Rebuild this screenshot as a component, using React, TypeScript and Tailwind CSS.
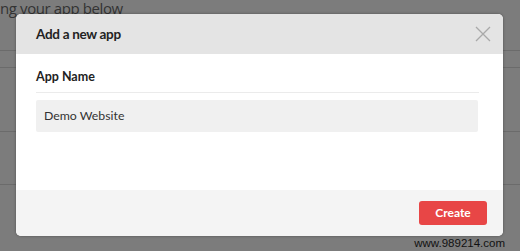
import React from 'react'

function CloseIcon() {
  return (
    <svg width="16" height="16" viewBox="0 0 16 16" fill="none" stroke="#a9a9a9" strokeWidth="1.3">
      <path d="M1 1 L15 15 M15 1 L1 15" />
    </svg>
  )
}

export default function App() {
  return (
    <div className="relative h-[251px] w-[520px] overflow-hidden bg-[#7c7c7c] font-['Lato',sans-serif]">
      {/* dimmed page behind the dialog */}
      <div className="flex flex-col">
        <div className="h-[51px] border-b border-[#6b6b6b]">
          <div className="-mt-[1px] whitespace-nowrap text-[15px] leading-[18px] tracking-[-0.4px] text-[#333] font-['Open_Sans',sans-serif]">ng your app below</div>
        </div>
        <div className="h-[17px] border-b border-[#6b6b6b]" />
        <div className="h-[64px] border-b border-[#6b6b6b]" />
        <div className="h-[53px] border-b border-[#6b6b6b]" />
      </div>

      <div className="absolute left-[16px] top-[14px] flex h-[222px] w-[487px] flex-col overflow-hidden rounded-[5px] bg-white shadow-[0_0_3px_rgba(0,0,0,0.35)]">
        <div className="flex h-[40px] items-center justify-between bg-[#e4e4e4] pl-5 pr-[12px]">
          <h2 className="text-[13.5px] font-bold tracking-[-0.3px] text-[#222]">Add a new app</h2>
          <CloseIcon />
        </div>

        <div className="flex h-[136px] flex-col pl-5 pr-[24px] pt-[14px]">
          <label className="border-b border-[#ebebeb] pb-[6px] text-[12.5px] font-bold leading-[18px] text-[#222]">App Name</label>
          <div className="mt-[7px] mr-[1px] flex h-[32px] items-center rounded-[2px] bg-[#f0f0f0] px-2 text-[12.3px] text-[#333]">
            Demo Website
          </div>
        </div>

        <div className="flex flex-1 items-center justify-end bg-[#f4f4f4] pr-4">
          <button className="h-[24px] w-[68px] rounded-[3px] bg-[#e84646] text-[12px] font-bold text-white">Create</button>
        </div>
      </div>

      <div className="absolute bottom-[1px] right-[15px] font-['Liberation_Sans',sans-serif] text-[11.5px] leading-[14px] text-[#111]">
        www.989214.com
      </div>
    </div>
  )
}
